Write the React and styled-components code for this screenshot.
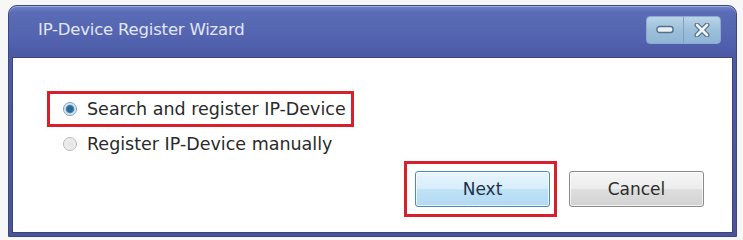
import React, { useState } from "react";
import styled, { createGlobalStyle } from "styled-components";

const GlobalStyle = createGlobalStyle`
  html, body {
    margin: 0;
    padding: 0;
    background: #f7f7f7;
  }
  body {
    font-family: "DejaVu Sans", Verdana, sans-serif;
  }
`;

const Page = styled.div`
  padding: 5px 6px 3px 8px;
`;

const Window = styled.div`
  width: 729px;
  height: 232px;
  box-sizing: border-box;
  display: flex;
  flex-direction: column;
  background: linear-gradient(#6f82c8 0px, #5a6cb6 6px, #5464b0 30px, #4c5ba6 48px, #4a5599 100%);
  border: 1px solid #3e4682;
  border-radius: 9px 9px 0 0;
  padding: 0 3px 3px 3px;
  box-shadow: inset 0 1px 0 #9fb0e4;
`;

const TitleBar = styled.div`
  height: 47px;
  flex-shrink: 0;
  display: flex;
  align-items: center;
  justify-content: space-between;
  padding: 0 12px 4px 26px;
`;

const Title = styled.span`
  font-size: 16.5px;
  color: #e2e6f2;
  letter-spacing: -0.2px;
`;

const CaptionGroup = styled.div`
  display: flex;
  height: 26px;
  border-radius: 4px;
  overflow: hidden;
  border: 1px solid #8fa8cf;
  background: linear-gradient(#b9d4e6, #9cc0da 50%, #8fb6d4);
`;

const CaptionButton = styled.div`
  width: 36px;
  display: flex;
  align-items: center;
  justify-content: center;
  & + & {
    border-left: 1px solid #7fa0c4;
  }
`;

const Content = styled.div`
  flex: 1;
  background: #ffffff;
  border: 1px solid #3b4275;
  display: flex;
  flex-direction: column;
  padding: 33px 28px 0 34px;
`;

const Options = styled.div`
  display: flex;
  flex-direction: column;
  align-items: flex-start;
`;

const Highlight = styled.div`
  border: 3px solid #d81f2c;
  padding: ${(p) => p.pad};
  display: flex;
`;

const Option = styled.label`
  display: flex;
  align-items: center;
  gap: 10px;
  font-size: 17.5px;
  line-height: 20px;
  color: #2a2a2a;
  padding: ${(p) => p.pad || "0"};
  cursor: pointer;
`;

const RadioDot = styled.span`
  width: 14px;
  height: 14px;
  border-radius: 50%;
  box-sizing: border-box;
  border: 1px solid ${(p) => (p.checked ? "#7f9db9" : "#b8b8b8")};
  background: ${(p) =>
    p.checked
      ? "radial-gradient(circle, #2a6a98 0 2.8px, #4f8cb8 3.8px, #d6e6f2 4.8px, #eef4f8 100%)"
      : "radial-gradient(circle, #e2e2e2 0, #f4f4f4 100%)"};
`;

const ButtonRow = styled.div`
  display: flex;
  justify-content: flex-end;
  align-items: center;
  gap: 12px;
  margin-top: 7px;
`;

const Button = styled.button`
  width: 135px;
  height: 36px;
  border-radius: 3px;
  font-family: "DejaVu Sans", Verdana, sans-serif;
  font-size: 17px;
  color: ${(p) => (p.primary ? "#1f3148" : "#2c2c2c")};
  border: 1px solid ${(p) => (p.primary ? "#4d8ab8" : "#8a8a8a")};
  background: ${(p) =>
    p.primary
      ? "linear-gradient(#e9f5fd, #d6edfa 50%, #bfe2f7 51%, #b2d9f2)"
      : "linear-gradient(#f6f6f6, #ececec 50%, #dedede 51%, #d2d2d2)"};
  box-shadow: inset 0 0 0 1px rgba(255, 255, 255, 0.7);
  cursor: pointer;
`;

export default function App() {
  const [mode, setMode] = useState("search");

  return (
    <Page>
      <GlobalStyle />
      <Window>
        <TitleBar>
          <Title>IP-Device Register Wizard</Title>
          <CaptionGroup>
            <CaptionButton>
              <svg width="18" height="9" viewBox="0 0 18 9">
                <rect x="1" y="1.5" width="16" height="6" rx="2.5" fill="#e8f0f6" stroke="#56708c" strokeWidth="1.4" />
              </svg>
            </CaptionButton>
            <CaptionButton>
              <svg width="16" height="14" viewBox="0 0 16 14">
                <path d="M3 2 L13 12 M13 2 L3 12" stroke="#56708c" strokeWidth="5" strokeLinecap="round" />
                <path d="M3 2 L13 12 M13 2 L3 12" stroke="#eef3f8" strokeWidth="2.6" strokeLinecap="round" />
              </svg>
            </CaptionButton>
          </CaptionGroup>
        </TitleBar>
        <Content>
          <Options>
            <Highlight pad="5px 5px 5px 13px">
              <Option onClick={() => setMode("search")}>
                <RadioDot checked={mode === "search"} />
                Search and register IP-Device
              </Option>
            </Highlight>
            <Option pad="7px 0 0 16px" onClick={() => setMode("manual")}>
              <RadioDot checked={mode === "manual"} />
              Register IP-Device manually
            </Option>
          </Options>
          <ButtonRow>
            <Highlight pad="7px 4px 7px 8px">
              <Button primary>Next</Button>
            </Highlight>
            <Button>Cancel</Button>
          </ButtonRow>
        </Content>
      </Window>
    </Page>
  );
}
